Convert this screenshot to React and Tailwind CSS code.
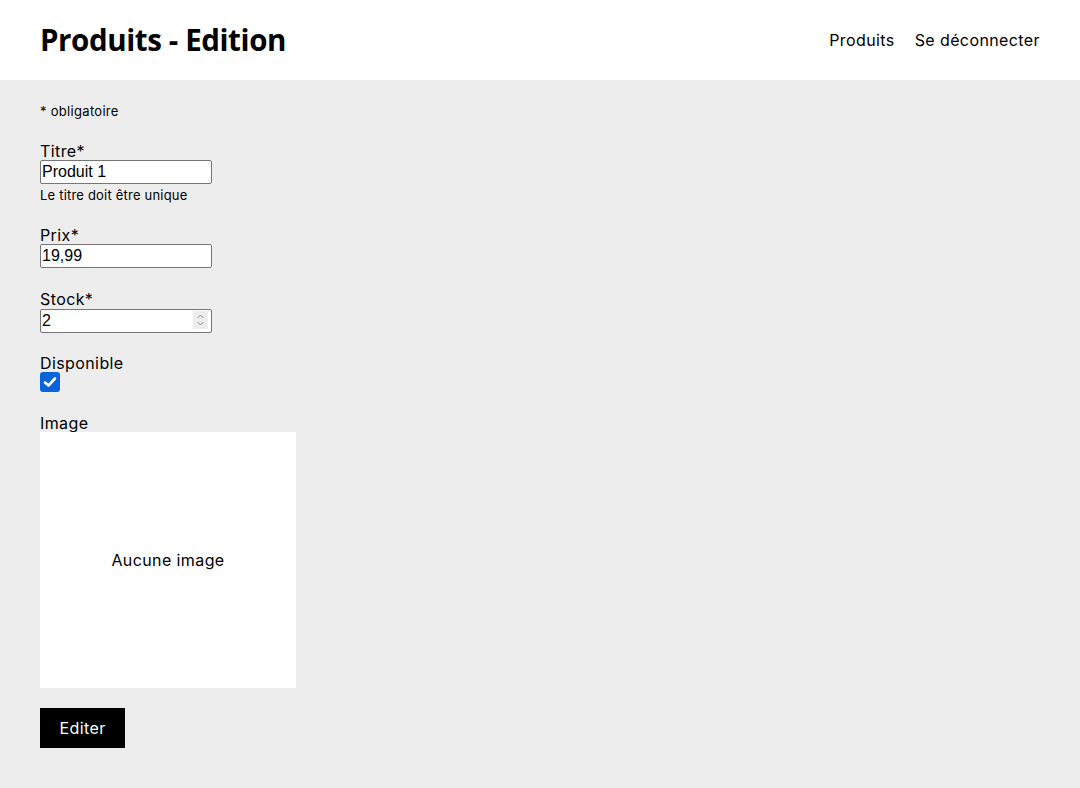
export default function App() {
    return (
        <div className="min-h-[788px] bg-[#ededed] text-black tracking-[0.4px]" style={{ fontFamily: "Inter, 'Noto Sans', sans-serif" }}>
            <header className="h-20 bg-white px-10 flex items-center justify-between">
                <h1 className="text-[29.5px] font-bold tracking-[-0.4px]" style={{ fontFamily: "'Open Sans', sans-serif" }}>
                    Produits - Edition
                </h1>
                <nav className="flex items-center gap-5 text-[16px] h-[26px] leading-[28px]">
                    <a href="#">Produits</a>
                    <a href="#">Se déconnecter</a>
                </nav>
            </header>

            <form className="px-10 pt-5 pb-10 flex flex-col items-start">
                <p className="text-[13px] h-5 leading-[22px] tracking-[0.3px] mb-[18px]">* obligatoire</p>

                <label className="text-[16px] h-[22px] leading-[26px]">Titre*</label>
                <input
                    type="text"
                    defaultValue="Produit 1"
                    className="w-[172px] h-6 bg-white border border-[#767676] rounded-[2px] px-[1px] text-[16px] tracking-normal"
                    style={{ fontFamily: "'Liberation Sans', sans-serif" }}
                />
                <p className="text-[13px] h-5 leading-[22px] tracking-[0.2px] mb-[18px]">Le titre doit être unique</p>

                <label className="text-[16px] h-[22px] leading-[26px]">Prix*</label>
                <input
                    type="text"
                    defaultValue="19,99"
                    className="w-[172px] h-6 bg-white border border-[#767676] rounded-[2px] px-[1px] text-[16px] tracking-normal mb-[18px]"
                    style={{ fontFamily: "'Liberation Sans', sans-serif" }}
                />

                <label className="text-[16px] h-[22px] leading-[26px]">Stock*</label>
                <div className="relative w-[172px] h-6 mb-[18px]">
                    <input
                        type="text"
                        defaultValue="2"
                        className="w-full h-full bg-white border border-[#767676] rounded-[2px] px-[1px] text-[16px] tracking-normal"
                        style={{ fontFamily: "'Liberation Sans', sans-serif" }}
                    />
                    <div className="absolute right-[4px] top-[3px] w-[15px] h-[18px] bg-[#ededed] flex flex-col items-center justify-center">
                        <svg width="9" height="14" viewBox="0 0 9 14" fill="none" stroke="#8a8a8a" strokeWidth="1">
                            <path d="M1.5 5 L4.5 2 L7.5 5" />
                            <path d="M1.5 9 L4.5 12 L7.5 9" />
                        </svg>
                    </div>
                </div>

                <label className="text-[16px] h-[22px] leading-[26px]">Disponible</label>
                <div className="w-5 h-5 rounded-[3px] bg-[#0b63d8] flex items-center justify-center mb-[18px]">
                    <svg width="16" height="16" viewBox="0 0 16 16" fill="none" stroke="white" strokeWidth="2.6" strokeLinecap="round" strokeLinejoin="round">
                        <path d="M3 8.5 L6.5 11.5 L13 4.5" />
                    </svg>
                </div>

                <label className="text-[16px] h-[22px] leading-[26px]">Image</label>
                <div className="w-64 h-64 bg-white flex items-center justify-center text-[16px] mb-5">
                    Aucune image
                </div>

                <button type="button" className="bg-black text-white text-[16px] h-10 w-[85px]">
                    Editer
                </button>
            </form>
        </div>
    );
}
